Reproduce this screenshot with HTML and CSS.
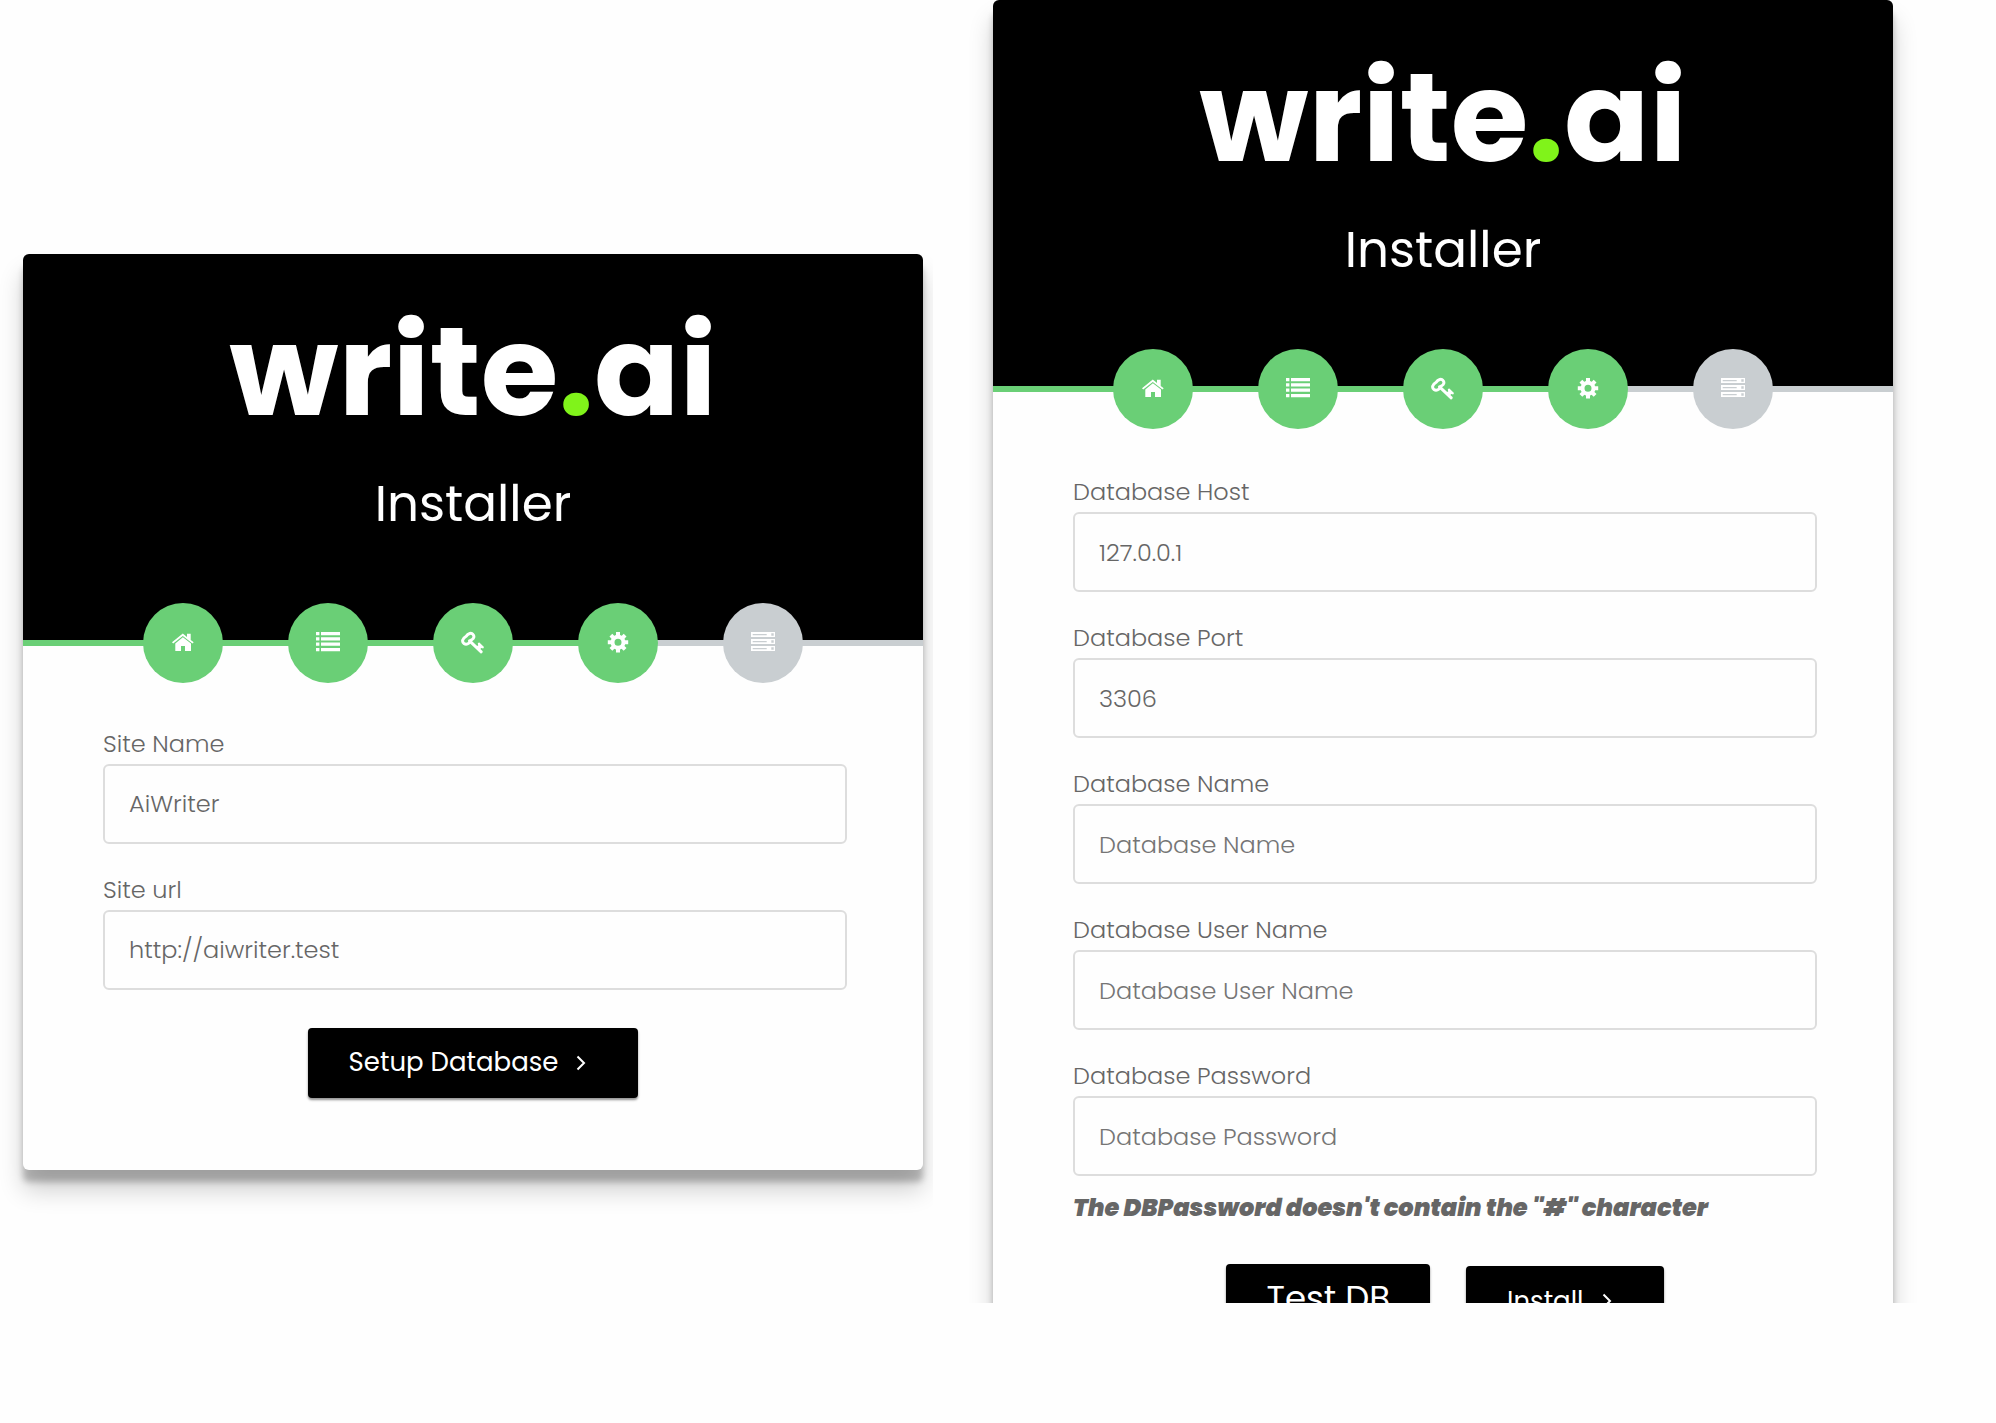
FILE: index.html
```html
<!DOCTYPE html>
<html lang="en">
<head>
<meta charset="utf-8">
<meta name="viewport" content="width=device-width, initial-scale=1">
<title>write.ai Installer</title>
<link rel="stylesheet" href="styles.css">
</head>
<body>
<svg class="sprite" aria-hidden="true">
  <symbol id="home" viewBox="0 0 24 24">
    <path d="M1 11.2 11.8 2.6l4.2 3.3V2.7h3.7v6.2l3 2.3-1.2 1.4-9.7-7.7-9.6 7.7z"/>
    <path d="M4.3 12.4 11.9 6.3l8.1 6.2V20h-6v-5h-4v5H4.3z"/>
  </symbol>
  <symbol id="list" viewBox="0 0 24 24">
    <path d="M0 1h3.4v3.2H0zM5 1h19v3.2H5zM0 6.3h3.4v3.2H0zM5 6.3h19v3.2H5zM0 11.6h3.4v3.2H0zM5 11.6h19v3.2H5zM0 17h3.4v3.2H0zM5 17h19v3.2H5z"/>
  </symbol>
  <symbol id="key" viewBox="0 0 24 24">
    <g fill="none" stroke="currentColor" stroke-width="3" stroke-linecap="round">
      <path d="M5.2 5.2C7 2 10.600 1.700 12 3.400c1.700 1.900.7 4.200-1 5.100-1 .5-1.300.8-1.800 2-1 2.300-4 3.500-6.200 2-2.200-1.600-2-5 2.200-7.300z"/>
      <path d="m8.500 9.800 11.700 11"/>
    </g>
    <path d="m17.200 14.500 -.4-2.400 1.600-.6 4.600 4.400-.8 1.700-2-.6-1.200 1.400-3.600-3.200z"/>
  </symbol>
  <symbol id="gear" viewBox="0 0 24 24">
    <g fill="none" stroke="currentColor" stroke-width="4">
      <circle cx="12" cy="11.300" r="5.500"/>
      <path d="M12 1v4M12 17.600v4M1.800 11.300h4M18.200 11.300h4M4.900 4.200l2.600 2.600M16.500 15.800l2.600 2.600M19.100 4.200l-2.600 2.600M7.500 15.800l-2.600 2.600"/>
    </g>
  </symbol>
  <symbol id="server" viewBox="0 0 24 24">
    <path fill-rule="evenodd" d="M0 1h24v5H0zM1.700 3h14v1.200h-14zM20.300 2.300h2.400v2.400h-2.400zM0 8h24v5H0zM1.700 10h14v1.200h-14zM20.300 9.300h2.400v2.400h-2.400zM0 15h24v5H0zM1.700 17h14v1.200h-14zM20.300 16.300h2.400v2.400h-2.400z"/>
  </symbol>
  <symbol id="chevron" viewBox="0 0 10 16">
    <path d="M1.500 1.500 8 8l-6.500 6.500" fill="none" stroke="currentColor" stroke-width="2"/>
  </symbol>
</svg>

<main class="page">
  <section class="pane pane-site">
    <div class="card">
      <header class="card-header">
        <div class="logo">write<span class="logo-dot">.</span>ai</div>
        <h1 class="title">Installer</h1>
      </header>
      <ol class="steps">
        <li><a class="step" href="#welcome" aria-label="Welcome"><svg><use href="#home"/></svg></a></li>
        <li><a class="step" href="#requirements" aria-label="Requirements"><svg><use href="#list"/></svg></a></li>
        <li><a class="step" href="#permissions" aria-label="Permissions"><svg><use href="#key"/></svg></a></li>
        <li><a class="step" href="#environment" aria-label="Environment"><svg><use href="#gear"/></svg></a></li>
        <li><a class="step step-pending" href="#finish" aria-label="Finish"><svg><use href="#server"/></svg></a></li>
      </ol>
      <form class="form">
        <div class="field">
          <label for="site-name">Site Name</label>
          <input id="site-name" type="text" value="AiWriter">
        </div>
        <div class="field">
          <label for="site-url">Site url</label>
          <input id="site-url" type="text" value="http://aiwriter.test">
        </div>
        <div class="actions">
          <button class="button" type="button">Setup Database <svg class="chevron"><use href="#chevron"/></svg></button>
        </div>
      </form>
    </div>
  </section>

  <section class="pane pane-database">
    <div class="card">
      <header class="card-header">
        <div class="logo">write<span class="logo-dot">.</span>ai</div>
        <h1 class="title">Installer</h1>
      </header>
      <ol class="steps">
        <li><a class="step" href="#welcome" aria-label="Welcome"><svg><use href="#home"/></svg></a></li>
        <li><a class="step" href="#requirements" aria-label="Requirements"><svg><use href="#list"/></svg></a></li>
        <li><a class="step" href="#permissions" aria-label="Permissions"><svg><use href="#key"/></svg></a></li>
        <li><a class="step" href="#environment" aria-label="Environment"><svg><use href="#gear"/></svg></a></li>
        <li><a class="step step-pending" href="#finish" aria-label="Finish"><svg><use href="#server"/></svg></a></li>
      </ol>
      <form class="form form-database">
        <div class="field">
          <label for="db-host">Database Host</label>
          <input id="db-host" type="text" value="127.0.0.1">
        </div>
        <div class="field">
          <label for="db-port">Database Port</label>
          <input id="db-port" type="text" value="3306">
        </div>
        <div class="field">
          <label for="db-name">Database Name</label>
          <input id="db-name" type="text" placeholder="Database Name">
        </div>
        <div class="field">
          <label for="db-user">Database User Name</label>
          <input id="db-user" type="text" placeholder="Database User Name">
        </div>
        <div class="field">
          <label for="db-password">Database Password</label>
          <input id="db-password" type="password" placeholder="Database Password">
          <p class="note">The DBPassword doesn't contain the "#" character</p>
        </div>
        <div class="actions">
          <button class="button button-large" type="button">Test DB</button>
          <button class="button" type="button">Install <svg class="chevron"><use href="#chevron"/></svg></button>
        </div>
      </form>
    </div>
  </section>
</main>
</body>
</html>
```
FILE: styles.css
```css
:root {
  --green: #6acf76;
  --grey: #c9ced1;
  --text: #666;
}

* {
  box-sizing: border-box;
}

body {
  margin: 0;
  background: #fefefe;
  color: var(--text);
  font-family: Poppins, Inter, "Open Sans", sans-serif;
  font-size: 24px;
  font-weight: 300;
}

.sprite {
  display: none;
}

.page {
  display: grid;
  grid-template-columns: 933fr 900fr;
  gap: 60px;
  height: 100vh;
  padding-right: 103px;
}

.pane-site {
  display: flex;
  align-items: center;
  padding: 0 10px 0 23px;
  overflow-x: clip;
}

.pane-database {
  height: calc(100vh - 120px);
  overflow-y: clip;
}

.card {
  width: 100%;
  border-radius: 6px;
  background: #fefefe;
  box-shadow: 0 20px 24px rgba(0, 0, 0, .19), 0 12px 6px rgba(0, 0, 0, .23);
}

.card-header {
  padding: 45px 0 94px;
  border-radius: 6px 6px 0 0;
  background: #000;
  color: #fff;
  text-align: center;
}

.logo {
  font-size: 126px;
  font-weight: 700;
  line-height: 144px;
}

.logo-dot {
  color: #80f31a;
}

.title {
  margin: 19px 0 0;
  font-size: 50px;
  font-weight: 400;
  line-height: 84px;
}

.steps {
  display: flex;
  align-items: center;
  justify-content: center;
  gap: 65px;
  height: 6px;
  margin: 0;
  padding: 0;
  background: linear-gradient(to right, var(--green) 63%, var(--grey) 63%);
  list-style: none;
}

.step {
  display: flex;
  align-items: center;
  justify-content: center;
  width: 80px;
  height: 80px;
  border-radius: 50%;
  background: var(--green);
  color: #fff;
}

.step-pending {
  background: var(--grey);
}

.step svg {
  width: 24px;
  height: 24px;
  fill: currentColor;
}

.form {
  padding: 78px 76px 72px 80px;
}

.form-database {
  padding-top: 80px;
}

.field {
  margin-bottom: 26px;
}

.field label {
  display: block;
  line-height: 40px;
}

.field input {
  display: block;
  width: 100%;
  height: 80px;
  padding: 0 24px;
  border: 2px solid #ddd;
  border-radius: 6px;
  background: #fefefe;
  color: var(--text);
  font: inherit;
}

.field input::placeholder {
  color: #757575;
}

.note {
  margin: 12px 0 0;
  font-style: italic;
  font-weight: 900;
  line-height: 40px;
}

.actions {
  display: flex;
  align-items: flex-end;
  justify-content: center;
  gap: 36px;
  padding: 12px 4px 0 0;
}

.form-database .actions {
  padding: 10px 0 0;
}

.button {
  display: flex;
  align-items: center;
  gap: 18px;
  height: 70px;
  padding: 0 52px 0 41px;
  border: 0;
  border-radius: 4px;
  background: #000;
  box-shadow: 0 2px 3px rgba(0, 0, 0, .24), 0 2px 2px rgba(0, 0, 0, .24);
  color: #fff;
  font: 400 26px Poppins, Inter, "Open Sans", sans-serif;
}

.button-large {
  height: 72px;
  padding: 0 40px 4px;
  font-size: 34px;
}

.chevron {
  width: 10px;
  height: 16px;
}
```
